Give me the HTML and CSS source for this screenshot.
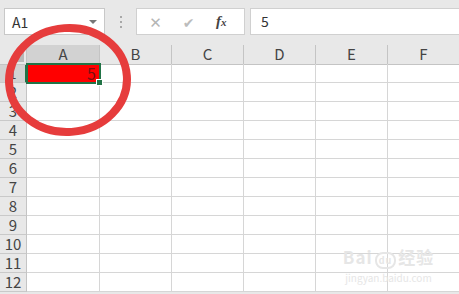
FILE: index.html
```html
<!DOCTYPE html>
<html lang="en">
<head>
    <meta charset="UTF-8">
    <title>sheet</title>
    <link rel="stylesheet" href="styles.css">
</head>
<body>
    <div class="toolbar">
        <div class="namebox">
            <span>A1</span>
            <span class="arrow"></span>
        </div>
        <div class="dots"><i></i><i></i><i></i></div>
        <div class="fxbox">
            <span class="btn">&#x2715;</span>
            <span class="btn check">&#x2714;</span>
            <span class="fx">f<span class="x">x</span></span>
        </div>
        <div class="formula">5</div>
    </div>

    <div class="sheet" id="sheet">
        <div class="row head">
            <div class="corner"><span class="tri"></span></div>
            <div class="cell col sel">A</div>
            <div class="cell col">B</div>
            <div class="cell col">C</div>
            <div class="cell col">D</div>
            <div class="cell col">E</div>
            <div class="cell col">F</div>
        </div>
        <div class="row">
            <div class="num sel">1</div>
            <div class="cell red">5</div>
            <div class="cell"></div>
            <div class="cell"></div>
            <div class="cell"></div>
            <div class="cell"></div>
            <div class="cell"></div>
        </div>

        <div class="picked"><span class="handle"></span></div>

        <div class="mark">
            <div class="mark-top">Bai<span class="paw">du</span>经验</div>
            <div class="mark-url">jingyan.baidu.com</div>
        </div>

        <svg class="ring" width="140" height="120" viewBox="0 0 140 120">
            <ellipse cx="68" cy="57" rx="59" ry="52" transform="rotate(-4 68 57)" />
        </svg>
    </div>

    <script>
        // rows 2 to 12 are empty
        const sheet = document.getElementById("sheet");
        const picked = document.querySelector(".picked");
        for (let i = 2; i <= 12; i++) {
            const row = document.createElement("div");
            row.className = "row";
            const num = document.createElement("div");
            num.className = "num";
            num.innerText = i;
            row.appendChild(num);
            for (let c = 0; c < 6; c++) {
                const cell = document.createElement("div");
                cell.className = "cell";
                row.appendChild(cell);
            }
            sheet.insertBefore(row, picked);
        }
    </script>
</body>
</html>
```

FILE: styles.css
```css
body {
    margin: 0;
    background: #e8e8e8;
    font-family: "Noto Sans CJK SC", "DejaVu Sans", sans-serif;
    overflow: hidden;
    width: 459px;
    height: 294px;
}
.toolbar {
    height: 45px;
    box-sizing: border-box;
    padding: 8px 0 0 4px;
    display: flex;
    align-items: flex-start;
}
.namebox {
    width: 101px;
    height: 27px;
    box-sizing: border-box;
    background: #fff;
    border: 1px solid #c8c8c8;
    display: flex;
    align-items: center;
    justify-content: space-between;
    padding: 0 7px 0 7px;
    font-size: 14px;
    color: #333;
}
.arrow {
    width: 0;
    height: 0;
    border-left: 4px solid transparent;
    border-right: 4px solid transparent;
    border-top: 4px solid #777;
    margin-top: 1px;
}
.dots {
    width: 31px;
    height: 27px;
    display: flex;
    flex-direction: column;
    align-items: center;
    justify-content: center;
    gap: 3px;
}
.dots i {
    width: 2px;
    height: 2px;
    background: #a8a8a8;
}
.fxbox {
    width: 109px;
    height: 27px;
    box-sizing: border-box;
    background: #fff;
    border: 1px solid #d0d0d0;
    display: flex;
    align-items: center;
    padding-left: 11px;
    gap: 18px;
}
.btn {
    color: #b5b5b5;
    font-size: 15px;
    width: 15px;
    text-align: center;
}
.check {
    font-size: 14px;
    color: #bcbcbc;
}
.fx {
    font-family: "Liberation Serif", serif;
    font-style: italic;
    font-weight: bold;
    font-size: 15px;
    color: #444;
    margin-left: 2px;
}
.fx .x {
    font-size: 11px;
}
.formula {
    flex: 1;
    height: 27px;
    margin-left: 5px;
    box-sizing: border-box;
    background: #fff;
    border: 1px solid #d0d0d0;
    border-right: none;
    padding-left: 10px;
    font-size: 14px;
    line-height: 25px;
    color: #333;
}
.sheet {
    position: relative;
    background: #fff;
}
.row {
    display: grid;
    grid-template-columns: 27px 73px 72px 72px 72px 72px 72px;
    height: 19px;
}
.row > div {
    box-sizing: border-box;
    border-right: 1px solid #d6d6d6;
    border-bottom: 1px solid #d6d6d6;
}
.head > div {
    background: #e8e8e8;
    border-right: 1px solid #c4c4c4;
    border-bottom: 1px solid #c4c4c4;
}
.corner {
    position: relative;
}
.tri {
    position: absolute;
    right: 2px;
    bottom: 2px;
    width: 0;
    height: 0;
    border-left: 10px solid transparent;
    border-bottom: 10px solid #b8b8b8;
}
.col {
    text-align: center;
    font-size: 15px;
    line-height: 18px;
    color: #444;
}
.row > .num {
    background: #e8e8e8;
    border-right: 1px solid #c4c4c4;
    border-bottom: 1px solid #c9c9c9;
    font-size: 15px;
    line-height: 18px;
    color: #444;
    text-align: center;
}
.head > .sel,
.row > .num.sel {
    background: #d2d2d2;
}
.row > .num.sel {
    border-right: 2px solid #217346;
}
.head > .sel {
    border-bottom: 2px solid #217346;
}
.red {
    background: #ff0000;
    text-align: right;
    padding-right: 3px;
    font-size: 16px;
    line-height: 18px;
    color: #7a1010;
}
.picked {
    position: absolute;
    left: 26px;
    top: 18px;
    width: 75px;
    height: 21px;
    box-sizing: border-box;
    border: 2px solid #217346;
}
.handle {
    position: absolute;
    right: -4px;
    bottom: -4px;
    width: 5px;
    height: 5px;
    background: #217346;
    border: 1px solid #fff;
}
.mark {
    position: absolute;
    left: 341px;
    top: 202px;
    width: 95px;
    text-align: center;
    color: #e6e6e6;
}
.mark-top {
    font-size: 17px;
    font-weight: bold;
    line-height: 20px;
    letter-spacing: 1px;
}
.paw {
    font-size: 9px;
    border: 2px solid #e6e6e6;
    border-radius: 8px;
    padding: 0 2px;
    margin: 0 2px;
}
.mark-url {
    font-size: 10px;
    line-height: 14px;
}
.ring {
    position: absolute;
    left: 0;
    top: -22px;
}
.ring ellipse {
    fill: none;
    stroke: #e63c3c;
    stroke-width: 8;
}
```
